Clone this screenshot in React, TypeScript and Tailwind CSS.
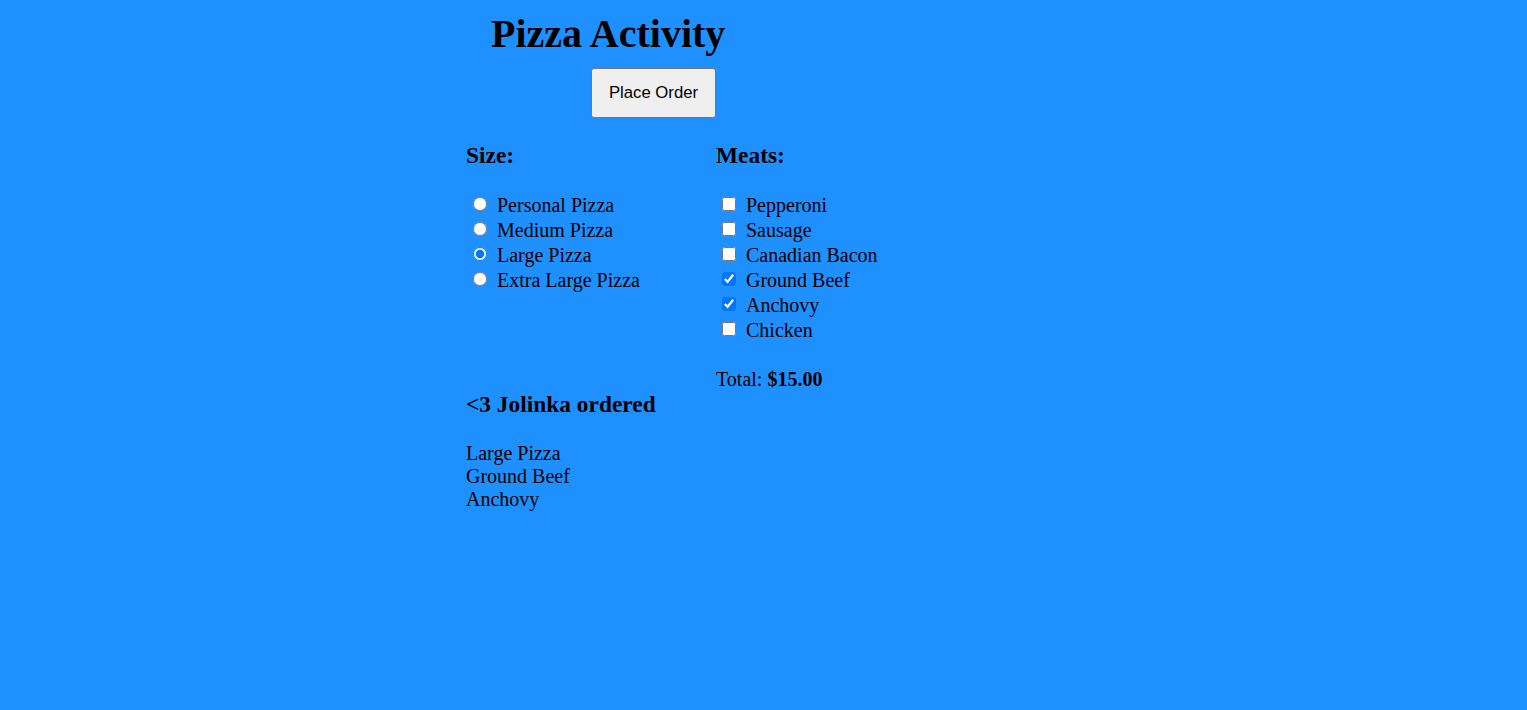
import { useState } from "react";

const sizes = ["Personal Pizza", "Medium Pizza", "Large Pizza", "Extra Large Pizza"];
const meats = ["Pepperoni", "Sausage", "Canadian Bacon", "Ground Beef", "Anchovy", "Chicken"];

const App = () => {
    const [size, setSize] = useState("Large Pizza");
    const [picked, setPicked] = useState<string[]>(["Ground Beef", "Anchovy"]);

    const toggleMeat = (meat: string) => {
        setPicked((prev) =>
            prev.includes(meat) ? prev.filter((m) => m !== meat) : [...prev, meat]
        );
    };

    return (
        <div className="h-[710px] bg-[#1e90ff] text-black font-['Liberation_Serif',serif] text-[20px]">
            <div className="mx-auto w-[595px] pt-[10.5px]">
                <h1 className="ml-[25px] text-[40px] leading-[46px] font-bold">Pizza Activity</h1>
                <button className="ml-[125px] mt-[11.5px] w-[125px] h-[50px] bg-[#efefef] border border-[#767676] rounded-[3px] font-['Liberation_Sans',sans-serif] text-[16.7px]">
                    Place Order
                </button>

                <div className="flex mt-[24.4px]">
                    <div className="w-[250px]">
                        <h3 className="text-[23.4px] leading-[27px] font-bold">Size:</h3>
                        <div className="mt-[24px]">
                            {sizes.map((s) => (
                                <label key={s} className="flex h-[25px]">
                                    <input
                                        type="radio"
                                        name="size"
                                        className="ml-[7px] mr-[10px] mt-[3.5px] w-[14px] h-[14px]"
                                        checked={size === s}
                                        onChange={() => setSize(s)}
                                    />
                                    <span className="leading-[25px]">{s}</span>
                                </label>
                            ))}
                        </div>
                    </div>
                    <div className="w-[250px]">
                        <h3 className="text-[23.4px] leading-[27px] font-bold">Meats:</h3>
                        <div className="mt-[24px]">
                            {meats.map((m) => (
                                <label key={m} className="flex h-[25px]">
                                    <input
                                        type="checkbox"
                                        className="ml-[6px] mr-[10px] mt-[3.5px] w-[14px] h-[14px]"
                                        checked={picked.includes(m)}
                                        onChange={() => toggleMeat(m)}
                                    />
                                    <span className="leading-[25px]">{m}</span>
                                </label>
                            ))}
                        </div>
                        <p className="mt-[25px] leading-[23px]">
                            Total: <b>$15.00</b>
                        </p>
                    </div>
                </div>

                <h3 className="text-[23.4px] leading-[27px] font-bold">&lt;3 Jolinka ordered</h3>
                <div className="mt-[23.5px] leading-[23px]">
                    <p>{size}</p>
                    {picked.map((m) => (
                        <p key={m}>{m}</p>
                    ))}
                </div>
            </div>
        </div>
    );
};

export default App;
